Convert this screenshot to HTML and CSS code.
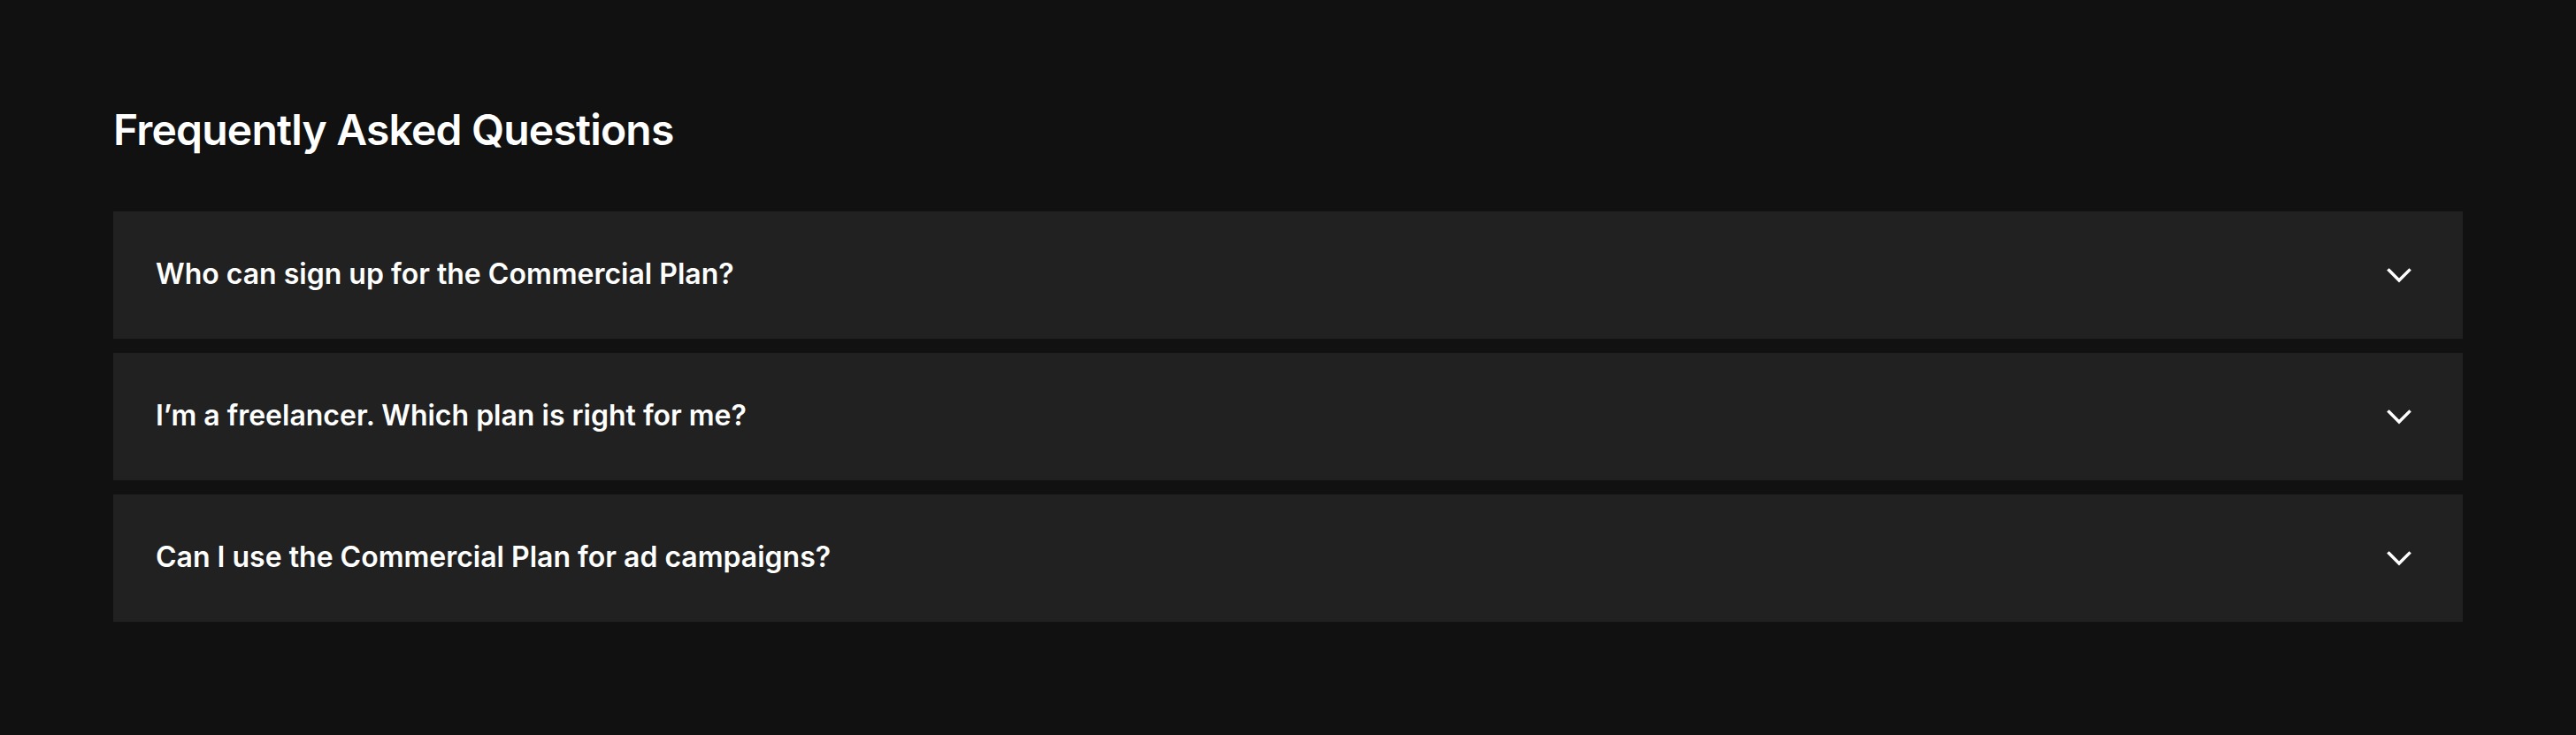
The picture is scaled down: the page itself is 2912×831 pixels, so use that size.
FILE: index.html
```html
<!DOCTYPE html>
<html lang="en">
<head>
<meta charset="utf-8">
<title>FAQ</title>
<link rel="stylesheet" href="styles.css">
</head>
<body>
<section class="faq">
  <h2 class="faq-title">Frequently Asked Questions</h2>
  <div class="faq-list">
    <div class="faq-item">
      <span class="faq-q">Who can sign up for the Commercial Plan?</span>
      <svg class="chev" viewBox="0 0 24 24" width="48" height="48" fill="none" stroke="#fff" stroke-width="1.75" stroke-linecap="square"><path d="M6.3 9.3l5.7 5.7 5.7-5.7"/></svg>
    </div>
    <div class="faq-item">
      <span class="faq-q">I’m a freelancer. Which plan is right for me?</span>
      <svg class="chev" viewBox="0 0 24 24" width="48" height="48" fill="none" stroke="#fff" stroke-width="1.75" stroke-linecap="square"><path d="M6.3 9.3l5.7 5.7 5.7-5.7"/></svg>
    </div>
    <div class="faq-item">
      <span class="faq-q">Can I use the Commercial Plan for ad campaigns?</span>
      <svg class="chev" viewBox="0 0 24 24" width="48" height="48" fill="none" stroke="#fff" stroke-width="1.75" stroke-linecap="square"><path d="M6.3 9.3l5.7 5.7 5.7-5.7"/></svg>
    </div>
  </div>
</section>
</body>
</html>
```
FILE: styles.css
```css
html, body {
  margin: 0;
  padding: 0;
  background: #111111;
}
body {
  font-family: Inter, "Noto Sans", sans-serif;
  color: #ffffff;
}
.faq {
  padding: 118px 128px 128px;
}
.faq-title {
  margin: 0 0 63px;
  font-size: 48px;
  line-height: 58px;
  font-weight: 600;
  letter-spacing: -0.8px;
}
.faq-list {
  display: flex;
  flex-direction: column;
  gap: 16px;
}
.faq-item {
  height: 144px;
  box-sizing: border-box;
  padding: 0 48px;
  background: #212121;
  display: flex;
  align-items: center;
  justify-content: space-between;
}
.faq-q {
  font-size: 32px;
  font-weight: 600;
  margin-top: -3px;
}
.chev {
  flex: none;
}
```
